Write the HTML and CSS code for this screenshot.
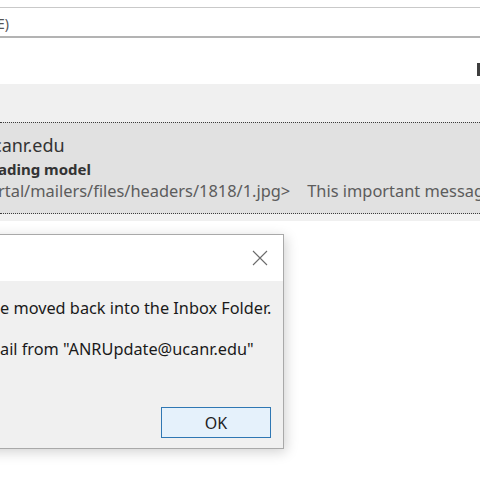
FILE: index.html
```html
<!DOCTYPE html>
<html>
<head>
<meta charset="utf-8">
<link rel="stylesheet" href="styles.css">
</head>
<body>
<div class="screen">
  <div class="search"><span class="search-text">E)</span></div>
  <div class="toolbar"><span class="edge-mark"></span></div>
  <div class="list">
    <div class="item">
      <div class="sender">canr.edu</div>
      <div class="subject">ading model</div>
      <div class="preview"><span>rtal/mailers/files/headers/1818/1.jpg&gt;</span><span class="preview-gap">This important message</span></div>
    </div>
  </div>
  <div class="desk">
    <div class="dialog">
      <div class="titlebar">
        <svg class="close" width="16" height="16" viewBox="0 0 16 16"><path d="M1 1 L15 15 M15 1 L1 15" stroke="#6b6b6b" stroke-width="1.1" fill="none"/></svg>
      </div>
      <div class="dialog-body">
        <p class="msg">e moved back into the Inbox Folder.</p>
        <p class="msg msg2">ail from "ANRUpdate@ucanr.edu"</p>
        <div class="buttons"><button class="ok">OK</button></div>
      </div>
    </div>
  </div>
</div>
</body>
</html>
```
FILE: styles.css
```css
html, body {
  margin: 0;
  padding: 0;
  background: #ffffff;
}
body {
  width: 480px;
  height: 480px;
  overflow: hidden;
  font-family: "Noto Sans", "Open Sans", sans-serif;
}
.screen {
  width: 480px;
  height: 480px;
  overflow: hidden;
  display: flex;
  flex-direction: column;
}
.search {
  margin-top: 7px;
  box-sizing: content-box;
  border-top: 1px solid #c9c9c9;
  border-bottom: 2px solid #b3b3b3;
  display: flex;
  align-items: center;
  padding-top: 3px;
  height: 25px;
  font-size: 14px;
  color: #555;
}
.search-text {
  margin-left: -3px;
}
.toolbar {
  height: 46px;
  display: flex;
  justify-content: flex-end;
  align-items: flex-start;
}
.edge-mark {
  width: 3px;
  height: 13px;
  margin-top: 25px;
  background: #3e3e3e;
}
.list {
  background: #f0f0f0;
  padding-top: 38px;
  padding-bottom: 7px;
}
.item {
  background: #e1e1e1;
  border-top: 1px dotted #3c3c3c;
  border-bottom: 1px dotted #3c3c3c;
  box-sizing: border-box;
  height: 92px;
  overflow: hidden;
  white-space: nowrap;
}
.sender {
  font-size: 18px;
  line-height: 24px;
  color: #333;
  margin-top: 10px;
  margin-left: -7px;
}
.subject {
  font-size: 15px;
  font-weight: bold;
  line-height: 20px;
  color: #333;
  margin-top: 2px;
  margin-left: -2px;
}
.preview {
  font-size: 16.4px;
  line-height: 20px;
  color: #5c5c5c;
  margin-top: 2px;
  margin-left: -2px;
}
.preview-gap {
  margin-left: 17px;
}
.desk {
  flex: 1;
  background: #ffffff;
  padding-top: 13px;
}
.dialog {
  width: 300px;
  margin-left: -16px;
  border: 1px solid #a9a9a9;
  box-sizing: border-box;
  box-shadow: 2px 3px 12px rgba(0, 0, 0, 0.18);
  background: #f0f0f0;
}
.titlebar {
  height: 46px;
  background: #ffffff;
  display: flex;
  justify-content: flex-end;
  align-items: center;
  padding-right: 15px;
}
.close {
  display: block;
}
.dialog-body {
  padding: 17px 12px 10px 15px;
}
.msg {
  margin: 0;
  font-size: 16.3px;
  line-height: 20px;
  color: #1a1a1a;
  white-space: nowrap;
}
.msg2 {
  margin-top: 21px;
}
.buttons {
  display: flex;
  justify-content: flex-end;
  margin-top: 48px;
}
.ok {
  width: 110px;
  height: 31px;
  border: 1px solid #2f77b3;
  background: #e5f1fb;
  font-family: "Noto Sans", "Open Sans", sans-serif;
  font-size: 16px;
  color: #1e1e1e;
  padding: 0;
}
```
